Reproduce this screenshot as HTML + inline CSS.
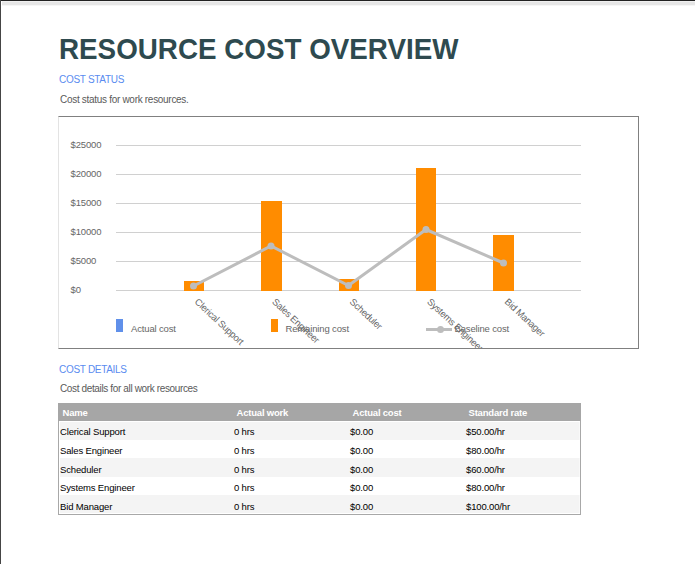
<!DOCTYPE html>
<html><head><meta charset="utf-8">
<style>
html,body{margin:0;padding:0;background:#fff;}
body{width:695px;height:564px;overflow:hidden;position:relative;font-family:"Liberation Sans",sans-serif;}
.a{position:absolute;white-space:nowrap;}
#tb{left:0;top:0;width:695px;height:1px;background:#222;}
#lb{left:0;top:0;width:1px;height:564px;background:#454545;}
#gl{left:2px;top:1px;width:693px;height:5px;background:linear-gradient(#f0f0f0 0,#f0f0f0 1px,#e6e6e6 1px,#e6e6e6 4px,#f6f6f6 4px,#f6f6f6 5px);}
#title{left:59px;top:32px;transform-origin:0 0;transform:scale(0.9925,1.053);font-size:28px;font-weight:bold;color:#2e4a4f;line-height:34px;}
.sec{font-size:10px;letter-spacing:-0.3px;color:#5a8cf0;line-height:13px;}
.desc{font-size:10px;letter-spacing:-0.3px;color:#5a5a5a;line-height:12px;}
#chart{left:58px;top:116px;width:581px;height:233px;border-top:1px solid #808080;border-right:1px solid #808080;border-bottom:1px solid #808080;border-left:1px solid #e3e3e3;box-sizing:border-box;overflow:hidden;}
#chart svg{position:absolute;left:-59px;top:-117px;}
#tbox{left:58px;top:403px;width:523px;height:112px;box-sizing:border-box;border:1px solid #a8a8a8;border-top:0;}
#thead{left:58px;top:403px;width:523px;height:18px;background:#a6a6a6;}
.rowbg{left:60px;width:520px;background:#f4f4f4;box-sizing:border-box;border-right:1px solid #f9f9f9;}
.th,.td{font-size:9.5px;letter-spacing:-0.15px;line-height:12px;}
.th{letter-spacing:-0.2px;}
.th{color:#fff;font-weight:bold;}
.td{color:#000;}
</style></head><body>
<div class="a" id="tb"></div>
<div class="a" id="lb"></div>
<div class="a" id="gl"></div>
<div class="a" id="title">RESOURCE COST OVERVIEW</div>
<div class="a sec" style="left:59px;top:72.5px;">COST STATUS</div>
<div class="a desc" style="left:60px;top:93.5px;">Cost status for work resources.</div>
<div class="a" id="chart">
<svg width="695" height="564" font-family="Liberation Sans" font-size="10" letter-spacing="-0.3">
<g stroke="#d0d0d0" stroke-width="1">
<line x1="116" y1="145.5" x2="581" y2="145.5"/>
<line x1="116" y1="174.5" x2="581" y2="174.5"/>
<line x1="116" y1="203.5" x2="581" y2="203.5"/>
<line x1="116" y1="232.5" x2="581" y2="232.5"/>
<line x1="116" y1="261.5" x2="581" y2="261.5"/>
<line x1="116" y1="290.5" x2="581" y2="290.5"/>
</g>
<g fill="#666" text-anchor="start">
<text x="70.5" y="147.6" font-size="9.5" letter-spacing="-0.15">$25000</text>
<text x="70.5" y="176.6" font-size="9.5" letter-spacing="-0.15">$20000</text>
<text x="70.5" y="205.6" font-size="9.5" letter-spacing="-0.15">$15000</text>
<text x="70.5" y="234.6" font-size="9.5" letter-spacing="-0.15">$10000</text>
<text x="70.5" y="263.6" font-size="9.5" letter-spacing="-0.15">$5000</text>
<text x="70.5" y="292.6" font-size="9.5" letter-spacing="-0.15">$0</text>
</g>
<g fill="#ff8c00">
<rect x="184" y="281" width="20" height="10"/>
<rect x="261" y="201" width="21" height="90"/>
<rect x="339" y="279" width="20" height="12"/>
<rect x="416" y="168" width="20" height="123"/>
<rect x="493" y="235" width="21" height="56"/>
</g>
<polyline points="193.5,286 271,246 348.5,285.5 426,229.5 503.5,263" fill="none" stroke="#bdbdbd" stroke-width="3"/>
<g fill="#bdbdbd">
<circle cx="193.5" cy="286" r="3.5"/>
<circle cx="271" cy="246" r="3.5"/>
<circle cx="348.5" cy="285.5" r="3.5"/>
<circle cx="426" cy="229.5" r="3.5"/>
<circle cx="503.5" cy="263" r="3.5"/>
</g>
<g fill="#666" font-size="9.5" letter-spacing="-0.3">
<text transform="translate(194.1,302.6) rotate(43)">Clerical Support</text>
<text transform="translate(271.6,302.6) rotate(43)">Sales Engineer</text>
<text transform="translate(349.1,302.6) rotate(43)">Scheduler</text>
<text transform="translate(426.6,302.6) rotate(43)">Systems Engineer</text>
<text transform="translate(504.1,302.6) rotate(43)">Bid Manager</text>
</g>
<rect x="116" y="319" width="7" height="13" fill="#6090ea"/>
<text x="131" y="332" fill="#666" font-size="9.5" letter-spacing="-0.15">Actual cost</text>
<rect x="271" y="319" width="7" height="13" fill="#ff8c00"/>
<text x="285.5" y="332" fill="#666" font-size="9.5" letter-spacing="-0.15">Remaining cost</text>
<line x1="426" y1="329.5" x2="452" y2="329.5" stroke="#bdbdbd" stroke-width="3"/>
<circle cx="440.5" cy="329.5" r="3.5" fill="#bdbdbd"/>
<text x="454.5" y="332" fill="#666" font-size="9.5" letter-spacing="-0.15">Baseline cost</text>
</svg>
</div>
<div class="a sec" style="left:59px;top:362.5px;">COST DETAILS</div>
<div class="a desc" style="left:60px;top:382.5px;letter-spacing:-0.36px;">Cost details for all work resources</div>
<div class="a" id="tbox"></div>
<div class="a" id="thead"></div>
<div class="a rowbg" style="top:422px;height:18px;"></div>
<div class="a rowbg" style="top:458px;height:19px;"></div>
<div class="a rowbg" style="top:495px;height:18px;"></div>
<div class="a th" style="left:62.5px;top:407px;">Name</div>
<div class="a th" style="left:236.5px;top:407px;">Actual work</div>
<div class="a th" style="left:352.5px;top:407px;">Actual cost</div>
<div class="a th" style="left:468.5px;top:407px;">Standard rate</div>
<div class="a td" style="left:60px;top:426px;">Clerical Support</div>
<div class="a td" style="left:234px;top:426px;">0 hrs</div>
<div class="a td" style="left:350px;top:426px;">$0.00</div>
<div class="a td" style="left:466px;top:426px;">$50.00/hr</div>
<div class="a td" style="left:60px;top:445px;">Sales Engineer</div>
<div class="a td" style="left:234px;top:445px;">0 hrs</div>
<div class="a td" style="left:350px;top:445px;">$0.00</div>
<div class="a td" style="left:466px;top:445px;">$80.00/hr</div>
<div class="a td" style="left:60px;top:464px;">Scheduler</div>
<div class="a td" style="left:234px;top:464px;">0 hrs</div>
<div class="a td" style="left:350px;top:464px;">$0.00</div>
<div class="a td" style="left:466px;top:464px;">$60.00/hr</div>
<div class="a td" style="left:60px;top:482px;">Systems Engineer</div>
<div class="a td" style="left:234px;top:482px;">0 hrs</div>
<div class="a td" style="left:350px;top:482px;">$0.00</div>
<div class="a td" style="left:466px;top:482px;">$80.00/hr</div>
<div class="a td" style="left:60px;top:501px;">Bid Manager</div>
<div class="a td" style="left:234px;top:501px;">0 hrs</div>
<div class="a td" style="left:350px;top:501px;">$0.00</div>
<div class="a td" style="left:466px;top:501px;">$100.00/hr</div>

</body></html>
